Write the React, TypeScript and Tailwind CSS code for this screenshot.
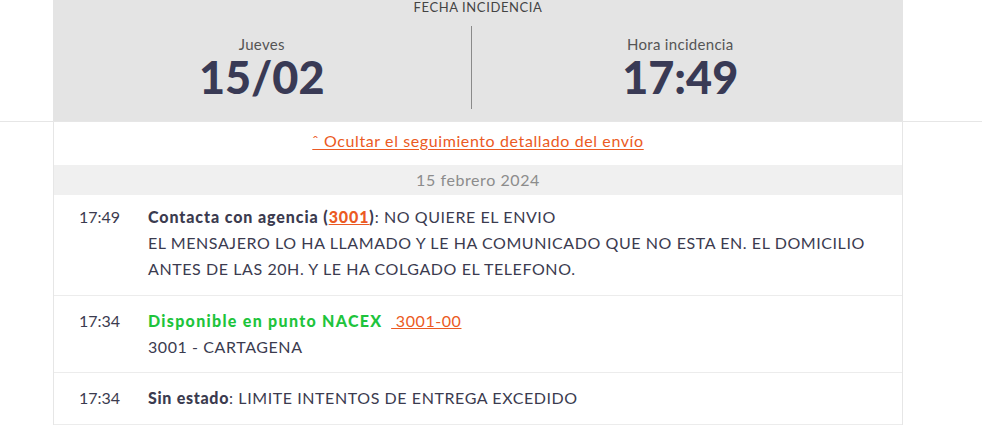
import React from 'react';

const events = [
    {
        time: '17:49',
        lines: ['EL MENSAJERO LO HA LLAMADO Y LE HA COMUNICADO QUE NO ESTA EN. EL DOMICILIO', 'ANTES DE LAS 20H. Y LE HA COLGADO EL TELEFONO.'],
    },
];

const App = () => {
    return (
        <div className="min-h-screen bg-white text-[#3b3b4f]" style={{ fontFamily: 'Lato, "Open Sans", sans-serif' }}>
            {/* Header */}
            <div className="border-b border-[#e6e6e6]">
                <div className="ml-[53px] w-[850px] h-[121px] bg-[#e4e4e4] flex flex-col items-center">
                    <p className="text-[13px] leading-[16px] tracking-[0.6px] text-[#444] mt-[-1px]">FECHA INCIDENCIA</p>
                    <div className="flex w-full mt-[11px] pr-[14px]">
                        <div className="flex-1 flex flex-col items-center pt-[11px]">
                            <p className="text-[15px] leading-[14px] tracking-[0.3px] text-[#555]">Jueves</p>
                            <p className="text-[45px] leading-[44px] font-black text-[#393a55] mt-[4px]">15/02</p>
                        </div>
                        <div className="w-px h-[83px] bg-[#8a8a8a]"></div>
                        <div className="flex-1 flex flex-col items-center pt-[11px]">
                            <p className="text-[15px] leading-[14px] tracking-[0.3px] text-[#555]">Hora incidencia</p>
                            <p className="text-[45px] leading-[44px] font-black text-[#393a55] mt-[4px]">17:49</p>
                        </div>
                    </div>
                </div>
            </div>

            {/* Tracking */}
            <div className="ml-[53px] w-[850px] border-x border-[#e6e6e6] tracking-[0.58px]">
                <div className="h-[43px] flex items-center justify-center">
                    <a href="#" className="text-[16px] tracking-[0.6px] text-[#eb5a23] underline underline-offset-2 mt-[-6px]">ˆ Ocultar el seguimiento detallado del envío</a>
                </div>
                <div className="h-[30px] bg-[#f0f0f0] flex items-center justify-center text-[16px] text-[#8c8c8c]">15 febrero 2024</div>

                <div className="flex border-b border-[#ececec] pt-[9px] pb-[13px] text-[16px] leading-[26px]">
                    <div className="w-[94px] pl-[25px] shrink-0 tracking-normal">{events[0].time}</div>
                    <div>
                        <p>
                            <span className="font-black tracking-[0.9px]">Contacta con agencia (<a href="#" className="text-[#eb5a23] underline">3001</a>)</span>: NO QUIERE EL ENVIO
                        </p>
                        {events[0].lines.map((line, index) => (
                            <p key={index}>{line}</p>
                        ))}
                    </div>
                </div>

                <div className="flex border-b border-[#ececec] pt-[12px] pb-[12px] text-[16px] leading-[26px]">
                    <div className="w-[94px] pl-[25px] shrink-0 tracking-normal">17:34</div>
                    <div>
                        <p>
                            <span className="font-black tracking-[1.3px] text-[#1ec43c]">Disponible en punto NACEX</span>{' '}
                            <a href="#" className="text-[#eb5a23] underline ml-1">&nbsp;3001-00</a>
                        </p>
                        <p>3001 - CARTAGENA</p>
                    </div>
                </div>

                <div className="flex border-b border-[#ececec] pt-[12px] pb-[13px] text-[16px] leading-[26px]">
                    <div className="w-[94px] pl-[25px] shrink-0 tracking-normal">17:34</div>
                    <p>
                        <span className="font-black tracking-[0.7px]">Sin estado</span>: LIMITE INTENTOS DE ENTREGA EXCEDIDO
                    </p>
                </div>
            </div>
        </div>
    );
};

export default App;
